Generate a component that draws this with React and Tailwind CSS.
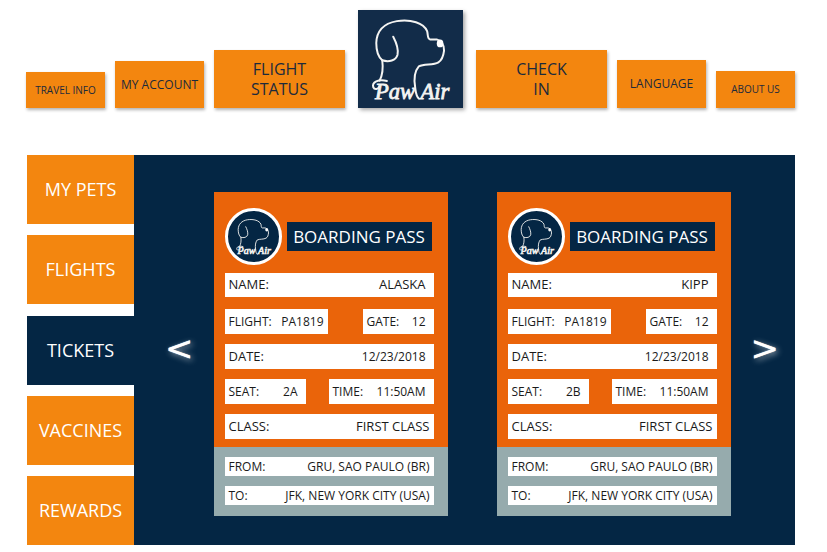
const passes = [
  { name: "ALASKA", flight: "PA1819", gate: "12", date: "12/23/2018", seat: "2A", time: "11:50AM", cabin: "FIRST CLASS", from: "GRU, SAO PAULO (BR)", to: "JFK, NEW YORK CITY (USA)" },
  { name: "KIPP", flight: "PA1819", gate: "12", date: "12/23/2018", seat: "2B", time: "11:50AM", cabin: "FIRST CLASS", from: "GRU, SAO PAULO (BR)", to: "JFK, NEW YORK CITY (USA)" },
];

const sections = ["MY PETS", "FLIGHTS", "TICKETS", "VACCINES", "REWARDS"];

function Logo({ className, stroke = 6, textStroke = 2.5 }) {
  return (
    <svg viewBox="25 31 316 292" className={className} role="img" aria-label="Paw Air">
      <g fill="none" stroke="#f4f4f2" strokeWidth={stroke} strokeLinecap="round" strokeLinejoin="round">
        <path d="M90 242 C99 225 101 204 98 181 C85 170 80 150 80 129 C81 93 103 70 142 63 C185 57 222 68 233 93 C236 102 233 117 242 118 L262 118 C274 121 285 134 284 152 C282 168 279 180 267 187 C251 196 225 191 208 199 C196 213 193 238 197 262 C199 276 199 288 208 296" />
        <path d="M131 110 C140 127 147 148 144 164 C139 182 118 187 98 181" />
        <path d="M112 243 C86 236 66 247 71 262 C75 271 86 268 89 260" />
      </g>
      <ellipse cx="272" cy="130" rx="10" ry="12" fill="#fff" />
      <g fill="#f4f4f2" stroke="#f4f4f2" strokeWidth={textStroke} fontSize="68" fontStyle="italic" fontFamily="'Liberation Serif', serif">
        <text x="76" y="296">Paw</text>
        <text x="213" y="296">Air</text>
      </g>
    </svg>
  );
}

function NavLink({ className, children }) {
  return (
    <a href="#" className={`flex min-w-0 items-center justify-center bg-[#f3860f] text-center text-[#1c2a3c] shadow-[1px_2px_3px_rgba(0,0,0,0.3)] ${className}`}>
      {children}
    </a>
  );
}

function Field({ label, value, className = "h-[25px] pr-2 text-[13px]", valueClass = "" }) {
  return (
    <div className={`flex items-center justify-between bg-white pl-1 whitespace-nowrap text-[#1a1a1a] ${className}`}>
      <dt>{label}:</dt>
      <dd className={valueClass}>{value}</dd>
    </div>
  );
}

function BoardingPass({ pass }) {
  return (
    <article className="w-[234px] shrink-0 bg-[#ea640a]">
      <header className="flex items-center gap-[5px] pt-4 pl-[11px]">
        <div className="flex size-[57px] items-center justify-center rounded-full border-3 border-white bg-[#042644]">
          <Logo className="w-[47px]" stroke={6} textStroke={4} />
        </div>
        <h2 className="flex h-[29px] w-[145px] items-center justify-center bg-[#042644] text-[17px] text-white">BOARDING PASS</h2>
      </header>
      <dl>
        <div className="flex flex-col gap-[10px] pt-2 pr-[14px] pb-2 pl-[11px]">
          <Field label="NAME" value={pass.name} className="mb-[2px] h-6 pr-2 text-[13px]" />
          <div className="flex justify-between">
            <Field label="FLIGHT" value={pass.flight} className="h-[25px] w-[103px] pr-1 text-[12px]" />
            <Field label="GATE" value={pass.gate} className="h-[25px] w-[71px] pr-2 text-[12px]" />
          </div>
          <Field label="DATE" value={pass.date} valueClass="text-[12px]" />
          <div className="flex justify-between">
            <Field label="SEAT" value={pass.seat} className="h-[25px] w-[81px] pr-2 text-[12px]" />
            <Field label="TIME" value={pass.time} className="h-[25px] w-[105px] pr-2 text-[12px]" />
          </div>
          <Field label="CLASS" value={pass.cabin} className="h-[25px] pr-1 text-[13px]" />
        </div>
        <div className="flex flex-col gap-[10px] bg-[#96abad] pt-[10px] pr-[14px] pb-[11px] pl-[11px]">
          <Field label="FROM" value={pass.from} className="h-[19px] pr-1 text-[12px]" />
          <Field label="TO" value={pass.to} className="h-[19px] pr-1 text-[12px]" />
        </div>
      </dl>
    </article>
  );
}

function Arrow({ label, children }) {
  return (
    <button type="button" aria-label={label} className="pb-3 font-['DejaVu_Sans',sans-serif] text-[34px] leading-none text-white [text-shadow:0_0_1px_#fff,2px_2px_6px_rgba(255,255,255,0.6)]">
      {children}
    </button>
  );
}

export default function App() {
  return (
    <div className="bg-white pt-[10px] pr-8 pb-[7px] pl-[26px] font-['Open_Sans','Noto_Sans',sans-serif]">
      <nav className="flex items-end gap-[10px]">
        <NavLink className="h-9 flex-[79] text-[10px]">TRAVEL INFO</NavLink>
        <NavLink className="h-[47px] flex-[89] text-[12px]">MY ACCOUNT</NavLink>
        <NavLink className="mr-[3px] h-[58px] flex-[131] text-[16px] leading-5">FLIGHT<br />STATUS</NavLink>
        <a href="#" className="shrink-0 bg-[#122c49] shadow-[2px_2px_4px_rgba(0,0,0,0.35)]">
          <Logo className="h-[98px] w-[105px]" />
        </a>
        <NavLink className="ml-[3px] h-[58px] flex-[131] text-[16px] leading-5">CHECK<br />IN</NavLink>
        <NavLink className="h-[48px] flex-[89] text-[12px]">LANGUAGE</NavLink>
        <NavLink className="h-[37px] flex-[79] text-[10px]">ABOUT US</NavLink>
      </nav>

      <div className="mt-[47px] ml-px flex">
        <nav className="flex w-[107px] shrink-0 flex-col justify-between">
          {sections.map((s) => (
            <a
              key={s}
              href="#"
              aria-current={s === "TICKETS" ? "page" : undefined}
              className={`flex h-[69px] items-center justify-center text-[18px] text-white ${s === "TICKETS" ? "bg-[#042644]" : "bg-[#f3860f]"}`}
            >
              {s}
            </a>
          ))}
        </nav>
        <main className="flex flex-1 items-center justify-between bg-[#042644] pt-[37px] pr-4 pb-[29px] pl-[31px]">
          <Arrow label="Previous tickets">&lt;</Arrow>
          <div className="flex gap-[49px]">
            {passes.map((p) => (
              <BoardingPass key={p.name} pass={p} />
            ))}
          </div>
          <Arrow label="Next tickets">&gt;</Arrow>
        </main>
      </div>
    </div>
  );
}
